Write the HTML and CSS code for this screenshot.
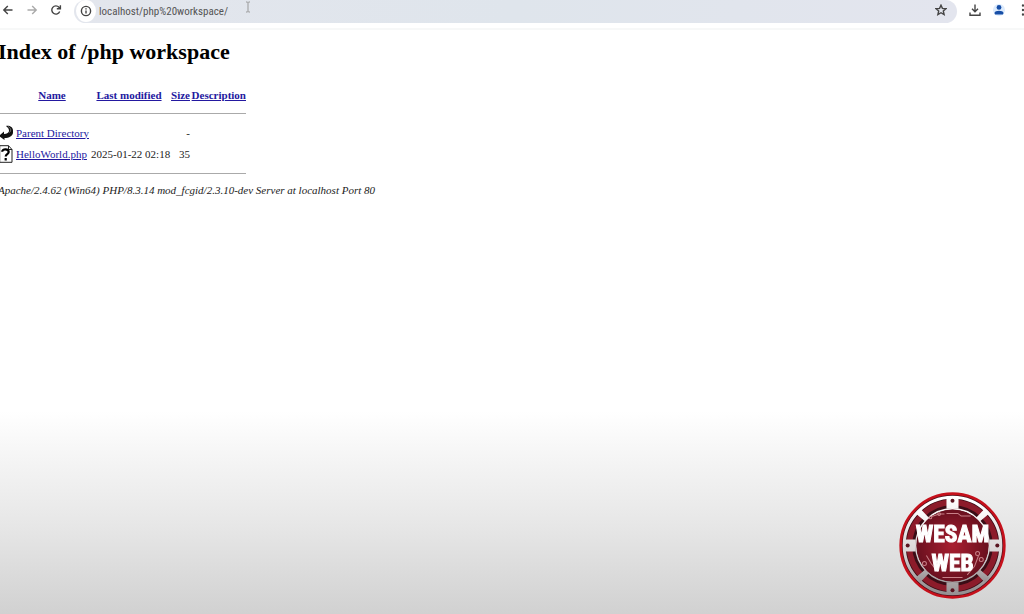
FILE: index.html
```
<!DOCTYPE html>
<html lang="en">

<head>
    <meta charset="UTF-8">
    <meta name="viewport" content="width=device-width, initial-scale=1.0">
    <title>Index of /php workspace</title>
    <link rel="stylesheet" href="styles.css">
</head>

<body>

    <header class="toolbar">
        <button class="tool" type="button" aria-label="Back">
            <svg viewBox="0 0 12 12"><path d="M10.500 6H2M5.800 2L1.800 6l4 4" /></svg>
        </button>
        <button class="tool disabled" type="button" aria-label="Forward">
            <svg viewBox="0 0 12 12"><path d="M1.500 6H10M6.200 2l4 4-4 4" /></svg>
        </button>
        <button class="tool" type="button" aria-label="Reload">
            <svg viewBox="0 0 12 12"><path d="M9.700 7.500A4.100 4.100 0 1 1 9 3.300L10.200 4.600M10.400 1.200v3.600H6.800" /></svg>
        </button>

        <form class="omnibox">
            <button class="site-info" type="button" aria-label="Site information">
                <svg viewBox="0 0 12 12"><circle cx="6" cy="6" r="4.600" /><path d="M6 5.400v3.200M6 3.200v1.200" /></svg>
            </button>
            <input class="url" type="text" aria-label="Address" value="localhost/php%20workspace/">
            <svg class="ibeam" viewBox="0 0 6 12"><path d="M1 1h1.500L3 1.500 3.500 1H5M3 1.500v9M1 11h1.500l.5-.5.5.5H5" /></svg>
            <button class="tool star" type="button" aria-label="Bookmark">
                <svg viewBox="0 0 12 12"><path d="M6 1.200l1.400 3.200 3.500.3-2.600 2.300.8 3.500L6 8.700l-3.100 1.800.8-3.500L1.100 4.700l3.500-.3z" /></svg>
            </button>
        </form>

        <button class="tool" type="button" aria-label="Downloads">
            <svg viewBox="0 0 12 12"><path d="M6 .5v7M3 4.800l3 3 3-3M1 8.500v2.800h10V8.500" /></svg>
        </button>
        <button class="tool profile" type="button" aria-label="Profile">
            <svg viewBox="0 0 12 12"><circle cx="6" cy="3.400" r="2.400" /><path d="M1.500 10.500V9C1.500 7.500 4 6.700 6 6.700s4.500.8 4.500 2.300v1.500z" /></svg>
        </button>
        <button class="tool menu" type="button" aria-label="Menu">
            <svg viewBox="0 0 12 12"><circle cx="6" cy="1.500" r="1.200" /><circle cx="6" cy="6" r="1.200" /><circle cx="6" cy="10.500" r="1.200" /></svg>
        </button>
    </header>

    <main class="listing">
        <h1>Index of /php workspace</h1>

        <table>
            <colgroup>
                <col class="col-icon">
                <col class="col-name">
                <col class="col-date">
                <col class="col-size">
                <col class="col-desc">
            </colgroup>
            <tr>
                <th></th>
                <th class="name"><a href="?C=N;O=D">Name</a></th>
                <th class="date"><a href="?C=M;O=A">Last modified</a></th>
                <th class="size"><a href="?C=S;O=A">Size</a></th>
                <th class="desc"><a href="?C=D;O=A">Description</a></th>
            </tr>
            <tr>
                <td class="rule" colspan="5"><hr></td>
            </tr>
            <tr>
                <td>
                    <svg class="file-icon" viewBox="0 0 14 18"><path d="M7 2c3-.8 7 .8 7 4.500v2C14 12 10 14 5.500 14v2L0 12l5-4.500V10C8 10 10 8.500 10 7 10 5 9 3.500 7 2z" fill="#111" /><path d="M9 2.500c3 1.500 3.500 4 1.500 6" fill="none" stroke="#777" /></svg>
                </td>
                <td><a href="/">Parent Directory</a></td>
                <td></td>
                <td class="size">-</td>
                <td></td>
            </tr>
            <tr>
                <td>
                    <svg class="file-icon" viewBox="0 0 14 18"><path d="M.7.700h8.800L13 4.500v12.800H.7z" fill="#fff" stroke="#222" /><path d="M9.500.7v3.800H13" fill="none" stroke="#222" /><path d="M3.200 6.800C3.200 3.500 9.700 3.500 9.700 7c0 2.200-3 2-3 4.500M6.700 13v2.500" fill="none" stroke="#000" stroke-width="2.200" /></svg>
                </td>
                <td><a href="HelloWorld.php">HelloWorld.php</a></td>
                <td>2025-01-22 02:18</td>
                <td class="size">35</td>
                <td></td>
            </tr>
            <tr>
                <td class="rule" colspan="5"><hr></td>
            </tr>
        </table>

        <address>Apache/2.4.62 (Win64) PHP/8.3.14 mod_fcgid/2.3.10-dev Server at localhost Port 80</address>
    </main>

    <svg class="watermark" viewBox="0 0 320 320" role="img" aria-label="Wesam Web">
        <defs>
            <radialGradient id="core">
                <stop offset="0" stop-color="#a91f30" />
                <stop offset="1" stop-color="#6a101f" />
            </radialGradient>
            <linearGradient id="metal" x1="0" y1="0" x2="0" y2="1">
                <stop offset="0" stop-color="#fff" />
                <stop offset="0.600" stop-color="#d8d3d4" />
                <stop offset="1" stop-color="#969092" />
            </linearGradient>
        </defs>
        <circle cx="160" cy="160" r="155" fill="#4c101b" stroke="#c5101b" stroke-width="8" />
        <!-- ring with its red slots -->
        <circle cx="160" cy="160" r="128" fill="none" stroke="url(#metal)" stroke-width="42" />
        <circle cx="160" cy="160" r="126" fill="none" stroke="#3a0d16" stroke-width="28" />
        <circle cx="160" cy="160" r="129" fill="none" stroke="#8c1b2a" stroke-width="17" />
        <g fill="url(#metal)">
            <path d="M142 14h36v36h-36zM142 270h36v36h-36zM14 142h36v36H14zM270 142h36v36h-36z" />
            <path d="M50 64l14-14 36 38-10 10zM270 64l-14-14-36 38 10 10zM50 256l14 14 36-38-10-10zM270 256l-14 14-36-38 10-10z" />
        </g>
        <g fill="#5a1420">
            <circle cx="160" cy="26" r="6" /><circle cx="160" cy="294" r="6" />
            <circle cx="26" cy="160" r="6" /><circle cx="294" cy="160" r="6" />
        </g>
        <circle cx="160" cy="160" r="108" fill="url(#core)" />
        <g fill="none" stroke="#c88088" stroke-width="3">
            <path d="M98 73l22-7h16M142 64h34l10 8h28M82 190l14 24 20 24M238 190l-12 32-22 26M130 256h60" />
            <circle cx="120" cy="66" r="4" /><circle cx="94" cy="76" r="4" />
            <circle cx="235" cy="184" r="6" /><circle cx="246" cy="202" r="6" /><circle cx="76" cy="214" r="6" />
        </g>
        <g class="brand">
            <text x="160" y="150">WESAM</text>
            <text x="160" y="236">WEB</text>
        </g>
    </svg>

</body>

</html>
```
FILE: styles.css
```
body {
    margin: 0;
    min-height: 100vh;
    overflow-x: hidden;
    background: linear-gradient(#fff 67%, #f3f3f3 76%, #e6e6e6 86%, #d1d1d1 100%);
    font-family: "Liberation Serif", serif;
    font-size: 11px;
    line-height: 16px;
    color: #222;
}

button {
    padding: 0;
    border: 0;
    background: none;
}

/* browser bar */
.toolbar {
    display: flex;
    align-items: flex-start;
    gap: 12px;
    height: 28px;
    padding-left: 2px;
    background: #fff;
    border-bottom: 2px solid #f7f8f8;
}

.tool {
    flex: none;
    width: 12px;
    height: 20px;
}

.tool svg,
.site-info svg {
    display: block;
    width: 12px;
    height: 12px;
    margin: auto;
    fill: none;
    stroke: #444;
    stroke-width: 1.4;
}

.disabled svg {
    stroke: #aaa;
}

.omnibox {
    display: flex;
    align-items: flex-start;
    flex: 1;
    height: 23px;
    padding: 0 10px 0 2px;
    background: linear-gradient(90deg, #e3e6ed, #dfe5ec 50%, #e3e5ee);
    border-radius: 12px;
}

.site-info {
    width: 20px;
    height: 22px;
    border-radius: 50%;
    background: #fff;
}

.url {
    width: 146px;
    height: 22px;
    margin-left: 3px;
    padding: 0;
    border: 0;
    outline: 0;
    background: none;
    font-family: "Roboto Condensed", Roboto, sans-serif;
    font-size: 11px;
    color: #555;
}

.ibeam {
    width: 6px;
    height: 14px;
    fill: none;
    stroke: #999;
}

.star {
    margin-left: auto;
}

.profile svg {
    fill: #174ea6;
    stroke: none;
    border-radius: 50%;
    background: #dcebfd;
}

.menu {
    margin-right: -5px;
}

.menu svg {
    fill: #444;
    stroke: none;
}

/* directory listing */
.listing {
    margin-left: -2px;
}

h1 {
    margin: 8px 0 20px;
    font-size: 22px;
    line-height: 28px;
    color: #000;
}

table {
    width: 248px;
    table-layout: fixed;
    border-collapse: collapse;
}

.col-icon {
    width: 18px;
}

.col-name {
    width: 75px;
}

.col-date {
    width: 79px;
}

.col-size {
    width: 20px;
}

th,
td {
    height: 21px;
    padding: 0;
    text-align: left;
    white-space: nowrap;
}

th {
    height: 18px;
}

.name,
.date {
    padding-right: 3px;
    text-align: center;
}

.size,
.desc {
    text-align: right;
}

.rule {
    height: 18px;
}

hr {
    margin: 0;
    border: 0;
    border-top: 1px solid #aaa;
}

a {
    color: #2318a0;
}

.file-icon {
    display: block;
    width: 14px;
    height: 18px;
    margin-left: 1px;
}

address {
    white-space: nowrap;
}

/* channel logo */
.watermark {
    position: fixed;
    right: 18px;
    bottom: 15px;
    width: 107px;
    height: 107px;
}

.brand {
    font-family: "Roboto Condensed", "Liberation Sans", sans-serif;
    font-size: 70px;
    font-weight: bold;
    text-anchor: middle;
    fill: #fff;
    stroke: #fff;
    stroke-width: 3;
}
```
